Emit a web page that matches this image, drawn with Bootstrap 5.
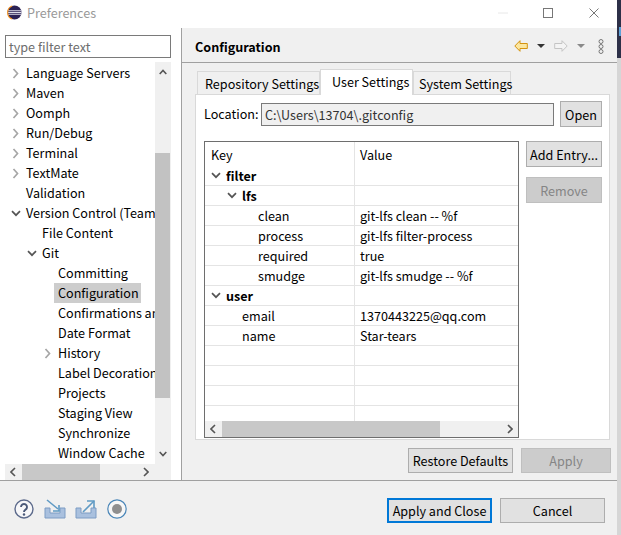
<!DOCTYPE html>
<html lang="en"><head><meta charset="utf-8"><title>Preferences</title>
<link href="https://cdn.jsdelivr.net/npm/bootstrap@5.3.0/dist/css/bootstrap.min.css" rel="stylesheet">
<style>
html,body{width:621px;height:535px;overflow:hidden;background:#d6d6d6}
body{font:12.6px/20px "Noto Sans CJK SC","Noto Sans",sans-serif;color:#000;position:relative}
.win{width:617px;height:535px;display:flex;flex-direction:column;border-right:0}
.titlebar{height:28px;flex:none;background:#fff;display:flex;align-items:center;padding:0 0 3px 7px;gap:5px;color:#999}
.tb-ctrl{margin-left:auto;display:flex;align-items:center}
.tb-ctrl svg{display:block}
.main{flex:none;height:453px;display:flex;border-bottom:1px solid #a0a0a0}
.left{width:182px;flex:none;background:#fff;padding:7px 10px 0 5px;border-right:1px solid #a0a0a0;display:flex;flex-direction:column}
.filter{height:23px;border:1px solid #7a7a7a;padding:0 3px;line-height:21px;color:#6d6d6d;flex:none;margin-bottom:4px}
.treewrap{flex:none;height:418px;display:grid;grid-template-columns:150px 16px;grid-template-rows:402px 16px}
.tree{overflow:hidden;padding-top:1px}
.ti{height:20px;display:flex;align-items:center;white-space:nowrap}
.ind0{padding-left:21px}.ind1{padding-left:37px}.ind2{padding-left:53px}
.tw{width:21px;margin-left:-21px;flex:none;display:flex;justify-content:center;align-items:center}
.sel{background:#cdcdcd;padding:0 2px 0 4px;margin-left:-4px;height:20px;line-height:20px}
.vs{background:#f0f0f0;position:relative}
.vs i{position:absolute;left:0;width:15px;top:91px;height:245px;background:#c2c2c2}
.vs svg{position:absolute;left:4px}
.hs{background:#f0f0f0;position:relative;display:flex;align-items:center;justify-content:space-between;padding:0 6px 0 5px}
.hs i{position:absolute;top:0;bottom:0;background:#c8c8c8}
.hs-l i{left:17px;width:78px}
.corner{background:#f0f0f0}
.right{flex:1;background:#f0f0f0;min-width:0;display:flex;flex-direction:column}
.head{height:35px;flex:none;border-bottom:1px solid #a0a0a0;display:flex;align-items:center;padding:3px 13px 0 13px;font-weight:700}
.head .tools{margin-left:auto;display:flex;align-items:center;margin-top:-1px}
.pbody{padding:7px 7px 0 13px;flex:1;display:flex;flex-direction:column}
.tabsx{display:flex;height:24px;flex:none;align-items:flex-end;padding-left:2px}
.tabx{height:23px;background:#f0f0f0;border:1px solid #d9d9d9;border-bottom:0;line-height:23px;padding:0 0 0 7px;white-space:nowrap}
.tabx.on{height:26px;background:#fff;line-height:23px;padding:0 3px 0 11px;margin-bottom:-1px;position:relative;z-index:1}
.tab1{width:123px}.tab2{width:93px}.tab3{width:98px;padding-left:5px}
.tabbody{height:346px;flex:none;background:#fff;border:1px solid #d9d9d9;padding:6px 7px 0 8px}
.locrow{display:flex;height:26px;align-items:center;margin-bottom:14px}
.loclbl{width:57px;flex:none}
.locinp{width:293px;height:23px;background:#f0f0f0;border:1px solid #7a7a7a;padding:0 3px;line-height:21px;color:#333}
.wbtn{background:#e1e1e1;border:1px solid #adadad;height:26px;padding:1px 0 0;line-height:22px;text-align:center;display:block;color:#000;font-size:12.6px;border-radius:0}
.wbtn.dis{background:#cccccc;color:#858585;border-color:#bfbfbf}
.wbtn.w42{width:42px;margin-left:6px}
.treegrid{display:flex}
.tbl{width:315px;height:297px;border:1px solid #6e6e6e;background:#fff;display:flex;flex-direction:column;flex:none}
.rows{height:279px;overflow:hidden;flex:none}
.rw{display:grid;grid-template-columns:150px 1fr;height:20px;border-bottom:1px solid #e4e4e4;white-space:nowrap}
.rw.h{border-bottom:0;height:24px}
.rw.n{border-bottom:0}
.rw>div{padding-left:6px;border-right:1px solid #e4e4e4;overflow:hidden;height:100%;line-height:19px;display:flex;align-items:center}
.rw>div+div{border-right:0;padding-left:5px;border-left:1px solid #e4e4e4;margin-left:-1px}
.rw b{font-weight:700}
.k0{padding-left:21px!important}
.k1{padding-left:37px!important}
.k2{padding-left:53px!important}
.hs-t{height:16px;flex:none;padding:0 5px}
.hs-t i{left:17px;width:218px}
.rside{margin-left:7px;width:76px;display:flex;flex-direction:column;gap:10px}
.pfoot{display:flex;justify-content:flex-end;gap:8px;padding:8px 0 0 0;margin-right:-1px;flex:none}
.pfoot .wbtn,.acts .wbtn{height:25px;padding-top:0}
.w105{width:105px}.w90{width:90px}
.bottom{flex:1;background:#f0f0f0;position:relative;display:flex;align-items:center;padding:0 12px 0 14px}
.icons{display:flex;align-items:center;gap:10px;margin-top:2px}
.ic3{margin-left:-1px}
.acts{margin-left:auto;display:flex;gap:8px;margin-top:5px}
.wbtn.pri{border:2px solid #0078d7;width:105px}
.wbtn.can{width:105px}
.dark{position:absolute;left:617px;top:0;width:4px;height:58px;background:#2d3048}
.darkglyph{position:absolute;left:619px;top:27px;width:2px;height:9px;background:#5ea2d8}
</style></head><body>
<div class="dark"></div><div class="darkglyph"></div>
<div class="win">
<div class="titlebar">
<svg width="15" height="15" viewBox="0 0 16 16"><circle cx="8" cy="8" r="7.500" fill="#2c2255"/><path d="M.6 6.200h14.800M.4 8h15.200M.6 9.800h14.800" stroke="#dcdce8" stroke-width="1.100"/><path d="M5.500 1A7.500 7.500 0 0 0 5.500 15" fill="none" stroke="#f7941e" stroke-width="1.200"/></svg>
<span>Preferences</span>
<div class="tb-ctrl">
<svg width="10" height="2" viewBox="0 0 10 2"><path d="M0 1h10" stroke="#e8e8e8"/></svg>
<svg width="10" height="10" viewBox="0 0 10 10" style="margin-left:35px"><rect x=".5" y=".5" width="9" height="9" fill="none" stroke="#777"/></svg>
<svg width="10" height="10" viewBox="0 0 10 10" style="margin:0 18px 0 36px"><path d="M.5.5l9 9M9.500.5l-9 9" stroke="#777"/></svg>
</div>
</div>
<div class="main">
<div class="left">
<div class="filter">type filter text</div>
<div class="treewrap">
<div class="tree" id="tree"></div>
<div class="vs">
<svg width="8" height="6" viewBox="0 0 8 6" style="top:7px"><path d="M.7 5l3.300-3.500L7.300 5" fill="none" stroke="#555" stroke-width="1.600"/></svg>
<i></i>
<svg width="8" height="6" viewBox="0 0 8 6" style="bottom:7px"><path d="M.7 1l3.300 3.500L7.300 1" fill="none" stroke="#555" stroke-width="1.600"/></svg>
</div>
<div class="hs hs-l"><svg width="6" height="10" viewBox="0 0 6 10" class="position-relative"><path d="M5 1L1 5l4 4" fill="none" stroke="#555" stroke-width="1.600"/></svg><i></i><svg width="6" height="10" viewBox="0 0 6 10"><path d="M1 1l4 4-4 4" fill="none" stroke="#555" stroke-width="1.600"/></svg></div>
<div class="corner"></div>
</div>
</div>
<div class="right">
<div class="head">Configuration
<div class="tools">
<svg width="14" height="12" viewBox="0 0 14 12"><path d="M6 .7L.8 6 6 11.300V8.500h7.300v-5H6z" fill="#fbe6a0" stroke="#d4930f" stroke-linejoin="round"/></svg>
<svg width="8" height="4" viewBox="0 0 8 4" style="margin-left:9px"><path d="M0 0h8L4 4z" fill="#333"/></svg>
<svg width="14" height="12" viewBox="0 0 14 12" style="margin-left:9px"><path d="M8 .7L13.200 6 8 11.300V8.500H.7v-5H8z" fill="#f4f4f4" stroke="#c4c4c4" stroke-linejoin="round"/></svg>
<svg width="8" height="4" viewBox="0 0 8 4" style="margin-left:9px"><path d="M0 0h8L4 4z" fill="#8a8a8a"/></svg>
<svg width="6" height="15" viewBox="0 0 6 15" style="margin-left:13px"><g fill="none" stroke="#777"><circle cx="3" cy="2.500" r="2"/><circle cx="3" cy="7.500" r="2"/><circle cx="3" cy="12.500" r="2"/></g></svg>
</div>
</div>
<div class="pbody">
<div class="tabsx">
<div class="tabx tab1">Repository Settings</div>
<div class="tabx tab2 on">User Settings</div>
<div class="tabx tab3">System Settings</div>
</div>
<div class="tabbody">
<div class="locrow"><span class="loclbl">Location:</span><div class="locinp">C:\Users\13704\.gitconfig</div><button class="wbtn w42" type="button">Open</button></div>
<div class="treegrid">
<div class="tbl">
<div class="rows" id="rows"></div>
<div class="hs hs-t"><svg width="6" height="10" viewBox="0 0 6 10" class="position-relative"><path d="M5 1L1 5l4 4" fill="none" stroke="#555" stroke-width="1.600"/></svg><i></i><svg width="6" height="10" viewBox="0 0 6 10"><path d="M1 1l4 4-4 4" fill="none" stroke="#555" stroke-width="1.600"/></svg></div>
</div>
<div class="rside">
<button class="wbtn" type="button">Add Entry...</button>
<button class="wbtn dis" type="button">Remove</button>
</div>
</div>
</div>
<div class="pfoot">
<button class="wbtn w105" type="button">Restore Defaults</button>
<button class="wbtn dis w90" type="button">Apply</button>
</div>
</div>
</div>
</div>
<div class="bottom">
<div class="icons">
<svg width="20" height="20" viewBox="0 0 20 20"><circle cx="10" cy="10" r="9" fill="#f7f7f9" stroke="#5d6b8c" stroke-width="1.400"/><path d="M7 8a3 3 0 1 1 4.500 2.600c-1 .6-1.500 1-1.500 2.400" fill="none" stroke="#4a5878" stroke-width="1.900"/><circle cx="10" cy="15.500" r="1.200" fill="#4a5878"/></svg>
<svg width="22" height="20" viewBox="0 0 22 20"><path d="M1 9v10h20V9h-5v5H6V9z" fill="#a9c0de" stroke="#7c9cc4"/><path d="M3 1l11 9" stroke="#5f9ac4" stroke-width="1.600"/><path d="M15 6v6H9" fill="none" stroke="#5f9ac4" stroke-width="1.600"/></svg>
<svg class="ic3" width="22" height="20" viewBox="0 0 22 20"><path d="M1 9v10h20V9h-5v5H6V9z" fill="#a9c0de" stroke="#7c9cc4"/><path d="M8 13l11-11" stroke="#5f9ac4" stroke-width="1.600"/><path d="M12 2h7v7" fill="none" stroke="#5f9ac4" stroke-width="1.600"/></svg>
<svg width="20" height="20" viewBox="0 0 20 20"><circle cx="10" cy="10" r="9.200" fill="#f7f7f7" stroke="#4a86b8" stroke-width="1.200"/><circle cx="10" cy="10" r="5" fill="#8f8f8f"/></svg>
</div>
<div class="acts">
<button class="wbtn pri" type="button">Apply and Close</button>
<button class="wbtn can" type="button">Cancel</button>
</div>
</div>
</div>
<script src="https://cdn.jsdelivr.net/npm/bootstrap@5.3.0/dist/js/bootstrap.bundle.min.js"></script>
<script>
var chevR='<svg width="7" height="11" viewBox="0 0 7 11"><path d="M1.500 1l4 4.500-4 4.500" fill="none" stroke="#a6a6a6" stroke-width="1.700"/></svg>';
var chevD='<svg width="10" height="7" viewBox="0 0 10 7"><path d="M1 1.200l4 4 4-4" fill="none" stroke="#555" stroke-width="1.700"/></svg>';
var items=[[0,'r','Language Servers'],[0,'r','Maven'],[0,'r','Oomph'],[0,'r','Run/Debug'],[0,'r','Terminal'],[0,'r','TextMate'],[0,'','Validation'],[0,'d','Version Control (Team)'],[1,'','File Content'],[1,'d','Git'],[2,'','Committing'],[2,'s','Configuration'],[2,'','Confirmations and Warnings'],[2,'','Date Format'],[2,'r','History'],[2,'','Label Decorations'],[2,'','Projects'],[2,'','Staging View'],[2,'','Synchronize'],[2,'','Window Cache']];
document.getElementById('tree').innerHTML=items.map(function(t){
 var tw=t[1]=='r'?'<span class="tw">'+chevR+'</span>':t[1]=='d'?'<span class="tw">'+chevD+'</span>':'';
 var tx=t[1]=='s'?'<span class="sel">'+t[2]+'</span>':'<span>'+t[2]+'</span>';
 return '<div class="ti ind'+t[0]+'">'+tw+tx+'</div>';}).join('');
var rows=[['h','Key','Value'],['b0','filter',''],['b1','lfs',''],['2','clean','git-lfs clean -- %f'],['2','process','git-lfs filter-process'],['2','required','true'],['2','smudge','git-lfs smudge -- %f'],['b0','user',''],['1','email','1370443225@qq.com'],['1','name','Star-tears'],['','',''],['','',''],['','',''],['n','','']];
document.getElementById('rows').innerHTML=rows.map(function(r){
 if(r[0]=='h')return '<div class="rw h"><div>'+r[1]+'</div><div>'+r[2]+'</div></div>';
 var c=r[0]=='b0'?'k0':r[0]=='b1'?'k1':r[0]=='2'?'k2':r[0]=='1'?'k1':'';
 var tw=r[0][0]=='b'?'<span class="tw">'+chevD+'</span>':'';
 var txt=r[0][0]=='b'?'<b>'+r[1]+'</b>':r[1];
 return '<div class="rw'+(r[0]=='n'?' n':'')+'"><div class="'+c+'">'+tw+txt+'</div><div>'+r[2]+'</div></div>';}).join('');
</script>
</body></html>
